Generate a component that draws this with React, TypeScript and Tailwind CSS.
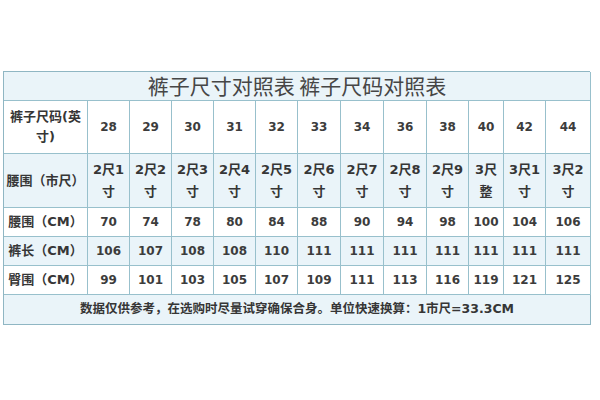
const cols = ["28", "29", "30", "31", "32", "33", "34", "36", "38", "40", "42", "44"];
const chi = [
  ["2尺1", "寸"], ["2尺2", "寸"], ["2尺3", "寸"], ["2尺4", "寸"], ["2尺5", "寸"], ["2尺6", "寸"],
  ["2尺7", "寸"], ["2尺8", "寸"], ["2尺9", "寸"], ["3尺", "整"], ["3尺1", "寸"], ["3尺2", "寸"],
];
const waist = ["70", "74", "78", "80", "84", "88", "90", "94", "98", "100", "104", "106"];
const length = ["106", "107", "108", "108", "110", "111", "111", "111", "111", "111", "111", "111"];
const hip = ["99", "101", "103", "105", "107", "109", "111", "113", "116", "119", "121", "125"];

const cell = "flex items-center justify-center border-r border-b border-[#98c0cc] text-center";

function Row({ label, values, bg }: { label: React.ReactNode; values: string[]; bg: string }) {
  return (
    <>
      <div className={`${cell} ${bg} h-[29px]`}>{label}</div>
      {values.map((v, i) => (
        <div key={i} className={`${cell} ${bg} h-[29px] text-[12px] text-[#3c3c3c]`}>
          {v}
        </div>
      ))}
    </>
  );
}

export default function App() {
  return (
    <div className="h-[400px] w-[600px] bg-white pl-[3px] pt-[71px]">
      <div
        className="grid w-[587px] grid-cols-[84px_42px_42px_42px_42px_42px_43px_43px_43px_42px_35px_42px_45px] border-l border-t border-[#8fb6c3] text-[13px] font-bold text-[#363636]"
        style={{ fontFamily: '"DejaVu Sans", "Noto Sans CJK SC", sans-serif' }}
      >
        <div
          className="col-span-13 flex h-[29px] items-center justify-center border-r border-b border-[#98c0cc] bg-[#eaf4f9] text-[21px] font-normal text-[#464646]"
          style={{ fontFamily: '"Noto Sans CJK SC", sans-serif' }}
        >
          裤子尺寸对照表 裤子尺码对照表
        </div>

        <div className={`${cell} h-[53px] bg-white leading-[20px]`}>
          <span>
            裤子尺码(英
            <br />
            寸)
          </span>
        </div>
        {cols.map((c) => (
          <div key={c} className={`${cell} h-[53px] bg-white text-[12px] text-[#3c3c3c]`}>
            {c}
          </div>
        ))}

        <div className={`${cell} h-[54px] bg-[#eaf4f9]`}>腰围（市尺）</div>
        {chi.map(([a, b], i) => (
          <div key={i} className={`${cell} h-[54px] bg-[#eaf4f9] leading-[22px]`}>
            <span>
              {a}
              <br />
              {b}
            </span>
          </div>
        ))}

        <Row label="腰围（CM）" values={waist} bg="bg-white" />
        <Row label="裤长（CM）" values={length} bg="bg-[#eaf4f9]" />
        <Row label="臀围（CM）" values={hip} bg="bg-white" />

        <div className="col-span-13 flex h-[30px] items-center justify-center border-r border-b border-[#8fb6c3] bg-[#eaf4f9] text-[12.5px]">
          数据仅供参考，在选购时尽量试穿确保合身。单位快速换算：1市尺=33.3CM
        </div>
      </div>
    </div>
  );
}
